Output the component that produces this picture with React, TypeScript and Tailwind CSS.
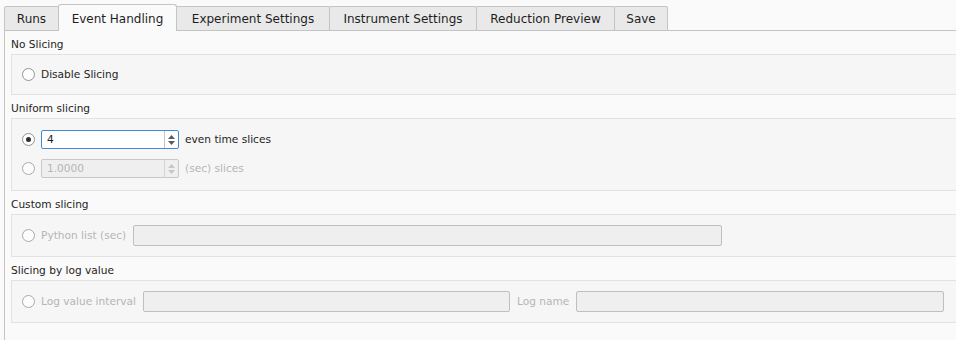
import type { ReactNode } from "react"

const tabs = [
  { label: "Runs", w: "w-[55px]" },
  { label: "Event Handling", w: "w-[119px]", active: true },
  { label: "Experiment Settings", w: "w-[154px]" },
  { label: "Instrument Settings", w: "w-[148px]" },
  { label: "Reduction Preview", w: "w-[139px]" },
  { label: "Save", w: "w-[54px]" },
]

function Radio({ checked, disabled }: { checked?: boolean; disabled?: boolean }) {
  return (
    <span
      className={
        "flex h-[13px] w-[13px] shrink-0 items-center justify-center rounded-full border " +
        (disabled ? "border-[#a9a9a9] bg-[#fcfcfc]" : "border-[#939393] bg-white")
      }
    >
      {checked && <span className="h-[5px] w-[5px] rounded-full bg-[#2e2e2e]" />}
    </span>
  )
}

function SpinBox({ value, disabled }: { value: string; disabled?: boolean }) {
  const arrow = disabled ? "#c6c6c6" : "#5a5a5a"
  return (
    <div
      className={
        "flex h-[19px] w-[138px] items-stretch rounded-[2px] border " +
        (disabled ? "border-[#c8c8c8] bg-[#efefef] text-[#b5b5b5]" : "border-[#3d8ad6] bg-white text-[#1e1e1e]")
      }
    >
      <span className="flex flex-1 items-center pl-[5px] leading-none">{value}</span>
      <span
        className={
          "flex w-[14px] flex-col items-center justify-center gap-[2px] border-l " +
          (disabled ? "border-[#d4d4d4]" : "border-[#c4c4c4]")
        }
      >
        <svg width="7" height="4" viewBox="0 0 7 4">
          <path d="M0 4 L3.5 0 L7 4 Z" fill={arrow} />
        </svg>
        <svg width="7" height="4" viewBox="0 0 7 4">
          <path d="M0 0 L3.5 4 L7 0 Z" fill={arrow} />
        </svg>
      </span>
    </div>
  )
}

function TextBox({ w }: { w: string }) {
  return <div className={"h-[21px] rounded-[2px] border border-[#bfbfbf] bg-[#efefef] " + w} />
}

function Section({ title, h, children }: { title: string; h: string; children: ReactNode }) {
  return (
    <div className="mt-[6px]">
      <div className="h-[14px] leading-[14px] text-[#1e1e1e]">{title}</div>
      <div className={"mt-[3px] border border-r-0 border-[#e2e2e2] bg-[#f6f6f6] pl-[10px] " + h}>{children}</div>
    </div>
  )
}

export default function App() {
  return (
    <div className="h-[340px] w-[956px] overflow-hidden bg-[#fafafa] font-['DejaVu_Sans',sans-serif] text-[10.6px]">
      <div className="relative z-10 flex h-[30px] items-end pl-[4px]">
        {tabs.map((t, i) =>
          t.active ? (
            <div
              key={t.label}
              className={
                "-mb-px -ml-px flex h-[27px] items-start justify-center rounded-t-[3px] border border-b-0 border-[#c4c4c4] bg-[#fafafa] pt-[5px] text-[12px] text-[#1e1e1e] " +
                t.w
              }
            >
              {t.label}
            </div>
          ) : (
            <div
              key={t.label}
              className={
                (i > 0 ? "-ml-px " : "") +
                "flex h-[24px] items-center justify-center rounded-t-[2px] border border-b-0 border-[#c4c4c4] bg-[#e9e9e9] text-[12px] text-[#1e1e1e] " +
                t.w
              }
            >
              {t.label}
            </div>
          ),
        )}
      </div>

      <div className="ml-[4px] h-[320px] border-l border-t border-[#c4c4c4] bg-[#fafafa] pl-[6px]">
        <Section title="No Slicing" h="h-[41px] flex items-center">
          <label className="flex items-center gap-[6px] text-[#1e1e1e]">
            <Radio />
            Disable Slicing
          </label>
        </Section>

        <Section title="Uniform slicing" h="h-[73px] pt-[11px]">
          <div className="flex flex-col gap-[10px]">
            <div className="flex items-center gap-[6px] text-[#1e1e1e]">
              <Radio checked />
              <SpinBox value="4" />
              <span>even time slices</span>
            </div>
            <div className="flex items-center gap-[6px] text-[#b5b5b5]">
              <Radio disabled />
              <SpinBox value="1.0000" disabled />
              <span>(sec) slices</span>
            </div>
          </div>
        </Section>

        <Section title="Custom slicing" h="h-[43px] flex items-center">
          <div className="flex items-center gap-[6px] text-[#b5b5b5]">
            <Radio disabled />
            <span className="mr-[1px]">Python list (sec)</span>
            <TextBox w="w-[589px]" />
          </div>
        </Section>

        <Section title="Slicing by log value" h="h-[43px] flex items-center">
          <div className="flex items-center gap-[6px] text-[#b5b5b5]">
            <Radio disabled />
            <span className="mr-[1px]">Log value interval</span>
            <TextBox w="w-[367px]" />
            <span className="mx-[1px]">Log name</span>
            <TextBox w="w-[368px]" />
          </div>
        </Section>
      </div>
    </div>
  )
}
